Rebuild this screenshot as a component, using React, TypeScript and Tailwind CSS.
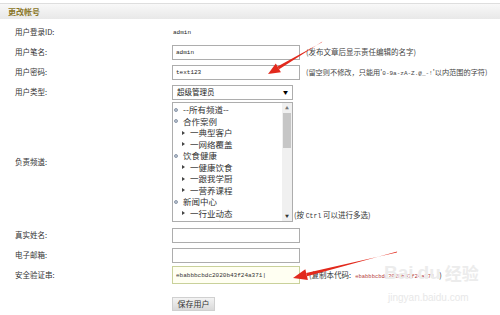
import React from "react";

const CJK = { fontFamily: '"Noto Sans CJK SC", "Noto Sans", sans-serif' };
const MONO = { fontFamily: '"Liberation Mono", "DejaVu Sans Mono", monospace' };

function Row({ label, h = "h-[20px]", children }: { label: string; h?: string; children?: React.ReactNode }) {
  return (
    <div className={`flex items-center ${h}`}>
      <div className="w-[172px] shrink-0 pl-[15px] text-[7.5px] text-[#333]" style={CJK}>
        {label}
      </div>
      {children}
    </div>
  );
}

function Box({ children, cls = "" }: { children?: React.ReactNode; cls?: string }) {
  return (
    <div
      className={`w-[128px] h-[15px] shrink-0 border border-[#adadad] bg-white pl-[3px] flex items-center text-[6px] text-[#222] ${cls}`}
      style={MONO}
    >
      {children}
    </div>
  );
}

const items: { t: string; child?: boolean }[] = [
  { t: "--所有频道--" },
  { t: "合作案例" },
  { t: "一典型客户", child: true },
  { t: "一网络覆盖", child: true },
  { t: "饮食健康" },
  { t: "一健康饮食", child: true },
  { t: "一跟我学厨", child: true },
  { t: "一营养课程", child: true },
  { t: "新闻中心" },
  { t: "一行业动态", child: true },
  { t: "一新闻资讯", child: true },
];

export default function App() {
  return (
    <div className="relative w-[500px] h-[315px] bg-white overflow-hidden" style={CJK}>
      <div className="mt-[3px] h-[16px] border-t border-[#dedede] bg-gradient-to-b from-[#f8f8f8] to-[#e8e8e8] flex items-center pl-[8px]">
        <span className="text-[8px] font-bold text-[#8a7628]" style={CJK}>更改帐号</span>
      </div>
      <div className="pt-[3px]">
        <Row label="用户登录ID:">
          <span className="pl-[1px] text-[6px] text-[#222]" style={MONO}>admin</span>
        </Row>
        <Row label="用户笔名:">
          <Box>admin</Box>
          <span className="pl-[6px] text-[7.5px] text-[#444] whitespace-nowrap">(发布文章后显示责任编辑的名字)</span>
        </Row>
        <Row label="用户密码:">
          <Box>text123</Box>
          <span className="pl-[6px] text-[7.2px] text-[#444] whitespace-nowrap">
            (留空则不修改，只能用'<span style={MONO} className="text-[6px]">0-9a-zA-Z.@_-!</span>'以内范围的字符)
          </span>
        </Row>
        <Row label="用户类型:">
          <div className="w-[121px] h-[15px] border border-[#adadad] bg-white flex items-center justify-between pl-[4px] pr-[4px]">
            <span className="text-[7.5px] text-[#222]">超级管理员</span>
            <span className="text-[5px] text-black">▼</span>
          </div>
        </Row>
        <div className="flex h-[123px]">
          <div className="w-[172px] shrink-0 pl-[15px] h-[120px] flex items-center text-[7.5px] text-[#333]">负责频道:</div>
          <div className="w-[121px] h-[120px] shrink-0 border border-[#adadad] bg-white flex overflow-hidden">
            <div className="flex-1 pt-[1px] overflow-hidden">
              {items.map((it, i) => (
                <div key={i} className="h-[11.5px] flex items-center text-[8.5px] text-[#333] whitespace-nowrap">
                  {it.child ? (
                    <>
                      <span className="ml-[9px] w-0 h-0 border-y-[2px] border-y-transparent border-l-[3px] border-l-[#444]" />
                      <span className="ml-[5px]">{it.t}</span>
                    </>
                  ) : (
                    <>
                      <span className="ml-[1px] w-[4px] h-[4px] rounded-full bg-[#b9c2cf] border border-[#8e9aab]" />
                      <span className="ml-[5px]">{it.t}</span>
                    </>
                  )}
                </div>
              ))}
            </div>
            <div className="w-[10px] h-full bg-[#f0f0f0] flex flex-col items-center">
              <span className="text-[4px] text-[#777] h-[10px] flex items-center">▲</span>
              <div className="w-[8px] h-[35px] bg-[#c6c6c6]" />
              <div className="flex-1" />
              <span className="text-[4px] text-[#333] h-[10px] flex items-center">▼</span>
            </div>
          </div>
          <div className="h-[120px] flex items-end">
            <span className="pl-[1px] text-[7.5px] text-[#333] whitespace-nowrap leading-[10px]">
              (按 <span style={MONO} className="text-[6.5px]">Ctrl</span> 可以进行多选)
            </span>
          </div>
        </div>
        <Row label="真实姓名:">
          <Box />
        </Row>
        <Row label="电子邮箱:">
          <Box />
        </Row>
        <Row label="安全验证串:">
          <div
            className="w-[128px] h-[18px] shrink-0 border border-[#c9d19a] bg-[#fffff2] pl-[3px] flex items-center text-[6px] text-[#333]"
            style={MONO}
          >
            ebabbbcbdc2020b43f24a371|
          </div>
          <span className="pl-[9px] text-[7.5px] text-[#333] whitespace-nowrap">
            (复制本代码:
            <span style={MONO} className="ml-[4px] text-[5.5px] text-[#b43c3c]">ebabbbcbdc2020b43f24a371</span>
            <span className="ml-[5px]">)</span>
          </span>
        </Row>
        <div className="flex pt-[12px]">
          <div className="w-[172px] shrink-0" />
          <div className="w-[43px] h-[14px] bg-gradient-to-b from-[#f3f3f3] to-[#d9d9d9] border border-[#d0d0d0] flex items-center justify-center text-[8px] text-[#333]">
            保存用户
          </div>
        </div>
      </div>

      {/* watermark */}
      <div className="absolute left-[384px] top-[262px] flex items-end gap-[4px] text-[#ececec] font-bold select-none pointer-events-none" style={{ fontFamily: '"Liberation Sans", sans-serif' }}>
        <span className="text-[19px] leading-[22px]">Bai</span>
        <span className="text-[19px] leading-[22px]">du</span>
        <span className="text-[17px] leading-[22px]" style={CJK}>经验</span>
      </div>
      <div className="absolute left-[388px] top-[290px] text-[10px] text-[#e8e8e8] pointer-events-none" style={{ fontFamily: '"Liberation Sans", sans-serif' }}>
        jingyan.baidu.com
      </div>

      {/* arrows */}
      <svg className="absolute left-0 top-0 pointer-events-none" width="500" height="315" viewBox="0 0 500 315">
        <polygon points="322.4,41.6 321.6,42.4 277.5,66.6 279.1,69.2" fill="#e2291c" />
        <polygon points="268,74 280.9,72.2 275.8,63.6" fill="#e2291c" />
        <polygon points="397.2,251.5 396.8,252.5 306.2,272.9 307.0,276.3" fill="#e2291c" />
        <polygon points="293,278 307.9,279.9 305.3,269.3" fill="#e2291c" />
      </svg>
    </div>
  );
}
